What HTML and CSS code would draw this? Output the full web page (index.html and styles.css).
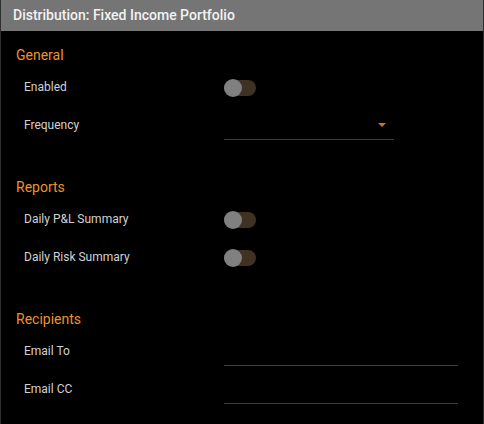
FILE: index.html
```html
<!DOCTYPE html>
<html>
<head>
<meta charset="utf-8">
<link rel="stylesheet" href="styles.css">
</head>
<body>
<div class="panel">
  <div class="header">Distribution: Fixed Income Portfolio</div>
  <div class="content">
    <div class="section">
      <div class="section-title">General</div>
      <div class="row">
        <div class="label">Enabled</div>
        <div class="switch"><div class="knob"></div></div>
      </div>
      <div class="row">
        <div class="label">Frequency</div>
        <div class="field select"><span class="arrow"></span></div>
      </div>
    </div>
    <div class="section">
      <div class="section-title">Reports</div>
      <div class="row">
        <div class="label">Daily P&amp;L Summary</div>
        <div class="switch"><div class="knob"></div></div>
      </div>
      <div class="row">
        <div class="label">Daily Risk Summary</div>
        <div class="switch"><div class="knob"></div></div>
      </div>
    </div>
    <div class="section">
      <div class="section-title">Recipients</div>
      <div class="row">
        <div class="label">Email To</div>
        <div class="field text"></div>
      </div>
      <div class="row">
        <div class="label">Email CC</div>
        <div class="field text"></div>
      </div>
    </div>
  </div>
</div>
</body>
</html>
```
FILE: styles.css
```css
* { box-sizing: border-box; }
html, body { margin: 0; padding: 0; background: #000; }
body { font-family: Roboto, "Noto Sans", sans-serif; }
.panel {
  width: 484px;
  height: 424px;
  background: #000;
  border-left: 1px solid #303030;
  border-right: 1px solid #303030;
  overflow: hidden;
}
.header {
  height: 31px;
  line-height: 31px;
  background: #757575;
  color: #f2f2f2;
  font-size: 14px;
  font-weight: 500;
  padding-left: 12px;
}
.content { padding-top: 12px; }
.section { margin-bottom: 31px; }
.section-title {
  height: 25px;
  line-height: 24px;
  padding-left: 15px;
  color: #ee922e;
  font-size: 14px;
}
.row {
  height: 38px;
  display: grid;
  grid-template-columns: 200px auto;
  align-items: center;
  padding-left: 23px;
}
.label {
  color: #d2d2d2;
  font-size: 12px;
}
.switch {
  position: relative;
  width: 32px;
  height: 16px;
  border-radius: 8px;
  background: #3f3222;
  margin-top: 2px;
}
.knob {
  position: absolute;
  left: 0;
  top: -1px;
  width: 18px;
  height: 18px;
  border-radius: 50%;
  background: #808080;
}
.field {
  align-self: start;
  height: 34px;
  padding-top: 5px;
  border-bottom: 1px solid #463d31;
  display: flex;
  align-items: center;
  justify-content: flex-end;
}
.select { width: 170px; padding-right: 8px; }
.text { width: 234px; }
.arrow {
  width: 0;
  height: 0;
  border-left: 4px solid transparent;
  border-right: 4px solid transparent;
  border-top: 4px solid #c67526;
}
```
